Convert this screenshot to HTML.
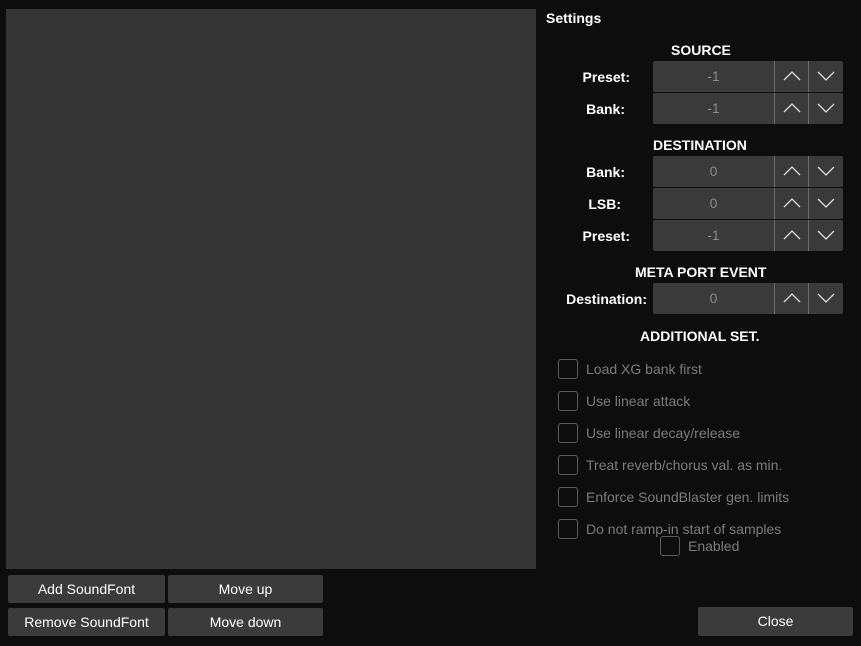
<!DOCTYPE html><html><head><style>
body{margin:0;width:861px;height:646px;background:#0d0d0d;font-family:"Liberation Sans",sans-serif;position:relative;overflow:hidden;color:#fff}
.a{position:absolute}
.h{font-weight:bold;font-size:14px}
.lbl{font-weight:bold;font-size:14px;text-align:right}
.sp{position:absolute;left:653px;width:190px;height:31px;background:#3a3a3a;border-radius:2px}
.sp .v{position:absolute;left:0;width:121px;top:0;line-height:31px;text-align:center;color:#8a8a8a;font-size:14px}
.sp .b{position:absolute;top:0;width:34px;height:31px;border-left:1px solid #6a6a6a}
.sp svg{position:absolute;left:8px;top:9px}
.cb{position:absolute;width:18px;height:18px;border:1px solid #5a5a5a;border-radius:3px}
.ct{position:absolute;color:#7c7c7c;font-size:14px}
.btn{position:absolute;background:#3b3b3b;border-radius:2px;text-align:center;color:#fff;font-size:14px;line-height:28px}
</style></head><body>
<div class="a" style="left:6px;top:9px;width:530px;height:560px;background:#353535"></div>
<div class="a h" style="left:546px;top:10px">Settings</div>
<div class="a h" style="left:671px;top:42px">SOURCE</div>
<div class="a lbl" style="left:560px;width:70px;top:69px">Preset:</div>
<div class="a lbl" style="left:560px;width:65px;top:101px">Bank:</div>
<div class="a h" style="left:653px;top:137px">DESTINATION</div>
<div class="a lbl" style="left:560px;width:65px;top:164px">Bank:</div>
<div class="a lbl" style="left:560px;width:61px;top:196px">LSB:</div>
<div class="a lbl" style="left:560px;width:70px;top:228px">Preset:</div>
<div class="a h" style="left:635px;top:264px">META PORT EVENT</div>
<div class="a lbl" style="left:540px;width:107px;top:291px">Destination:</div>
<div class="a h" style="left:640px;top:328px">ADDITIONAL SET.</div>

<div id="sps"></div>
<script></script>
<div class="sp" style="top:61px"><div class="v">-1</div><div class="b" style="left:121px"><svg width="18" height="12"><path d="M1 10L9 2L17 10" stroke="#ddd" fill="none" stroke-width="1.3"/></svg></div><div class="b" style="left:155px"><svg width="18" height="12"><path d="M1 2L9 10L17 2" stroke="#ddd" fill="none" stroke-width="1.3"/></svg></div></div>
<div class="sp" style="top:93px"><div class="v">-1</div><div class="b" style="left:121px"><svg width="18" height="12"><path d="M1 10L9 2L17 10" stroke="#ddd" fill="none" stroke-width="1.3"/></svg></div><div class="b" style="left:155px"><svg width="18" height="12"><path d="M1 2L9 10L17 2" stroke="#ddd" fill="none" stroke-width="1.3"/></svg></div></div>
<div class="sp" style="top:156px"><div class="v">0</div><div class="b" style="left:121px"><svg width="18" height="12"><path d="M1 10L9 2L17 10" stroke="#ddd" fill="none" stroke-width="1.3"/></svg></div><div class="b" style="left:155px"><svg width="18" height="12"><path d="M1 2L9 10L17 2" stroke="#ddd" fill="none" stroke-width="1.3"/></svg></div></div>
<div class="sp" style="top:188px"><div class="v">0</div><div class="b" style="left:121px"><svg width="18" height="12"><path d="M1 10L9 2L17 10" stroke="#ddd" fill="none" stroke-width="1.3"/></svg></div><div class="b" style="left:155px"><svg width="18" height="12"><path d="M1 2L9 10L17 2" stroke="#ddd" fill="none" stroke-width="1.3"/></svg></div></div>
<div class="sp" style="top:220px"><div class="v">-1</div><div class="b" style="left:121px"><svg width="18" height="12"><path d="M1 10L9 2L17 10" stroke="#ddd" fill="none" stroke-width="1.3"/></svg></div><div class="b" style="left:155px"><svg width="18" height="12"><path d="M1 2L9 10L17 2" stroke="#ddd" fill="none" stroke-width="1.3"/></svg></div></div>
<div class="sp" style="top:283px"><div class="v">0</div><div class="b" style="left:121px"><svg width="18" height="12"><path d="M1 10L9 2L17 10" stroke="#ddd" fill="none" stroke-width="1.3"/></svg></div><div class="b" style="left:155px"><svg width="18" height="12"><path d="M1 2L9 10L17 2" stroke="#ddd" fill="none" stroke-width="1.3"/></svg></div></div>

<div class="cb" style="left:558px;top:359px"></div><div class="ct" style="left:586px;top:361px">Load XG bank first</div>
<div class="cb" style="left:558px;top:391px"></div><div class="ct" style="left:586px;top:393px">Use linear attack</div>
<div class="cb" style="left:558px;top:423px"></div><div class="ct" style="left:586px;top:425px">Use linear decay/release</div>
<div class="cb" style="left:558px;top:455px"></div><div class="ct" style="left:586px;top:457px">Treat reverb/chorus val. as min.</div>
<div class="cb" style="left:558px;top:487px"></div><div class="ct" style="left:586px;top:489px">Enforce SoundBlaster gen. limits</div>
<div class="cb" style="left:558px;top:519px"></div><div class="ct" style="left:586px;top:521px">Do not ramp-in start of samples</div>
<div class="cb" style="left:660px;top:536px"></div><div class="ct" style="left:688px;top:538px">Enabled</div>

<div class="btn" style="left:8px;top:575px;width:157px">Add SoundFont</div>
<div class="btn" style="left:168px;top:575px;width:155px">Move up</div>
<div class="btn" style="left:8px;top:608px;width:157px">Remove SoundFont</div>
<div class="btn" style="left:168px;top:608px;width:155px">Move down</div>
<div class="btn" style="left:698px;top:607px;width:155px;height:29px">Close</div>
</body></html>
